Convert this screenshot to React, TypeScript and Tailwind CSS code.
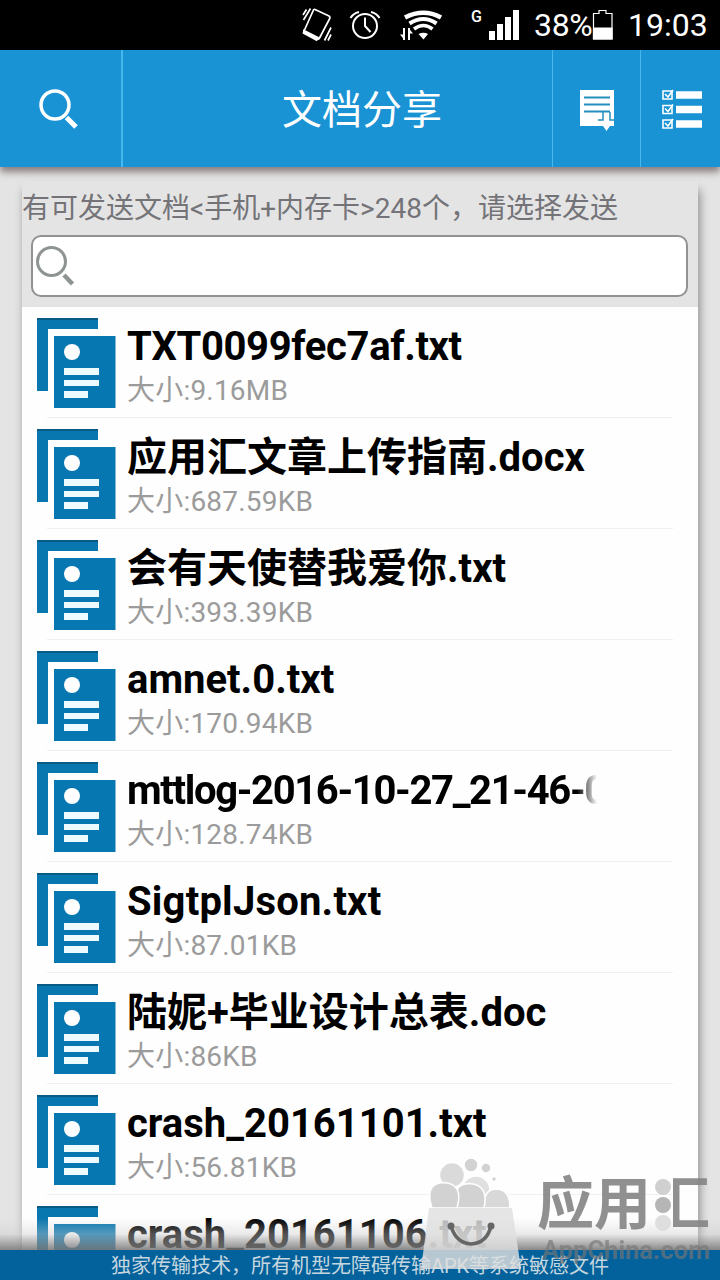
import React from 'react'

type DocFile = {
  name: string
  size: string
  nameClass?: string
}

const files: DocFile[] = [
  { name: 'TXT0099fec7af.txt', size: '9.16MB', nameClass: 'tracking-[-0.35px]' },
  { name: '应用汇文章上传指南.docx', size: '687.59KB' },
  { name: '会有天使替我爱你.txt', size: '393.39KB' },
  { name: 'amnet.0.txt', size: '170.94KB' },
  {
    name: 'mttlog-2016-10-27_21-46-0',
    size: '128.74KB',
    nameClass: 'tracking-[-1.35px] [mask-image:linear-gradient(to_right,black_450px,transparent_470px)]',
  },
  { name: 'SigtplJson.txt', size: '87.01KB', nameClass: 'tracking-[0.2px]' },
  { name: '陆妮+毕业设计总表.doc', size: '86KB' },
  { name: 'crash_20161101.txt', size: '56.81KB' },
  { name: 'crash_20161106.txt', size: '52.3KB' },
]

function StatusBar() {
  return (
    <div className="h-[50px] shrink-0 bg-black text-white flex items-center">
      <svg className="ml-[301px] shrink-0" width="32" height="50" fill="none" stroke="#fff" strokeWidth="1.7">
        <path d="M14 9.5 28 16Q29.5 17 28.5 19L18.5 38Q17.5 40 15.5 39L4 33Q2.5 32 3.5 30L12 11Q12.5 9 14 9.5Z" />
        <path d="M3 30.5 17 37.5 15.5 40 2.5 33Z" fill="#fff" />
        <path d="M2 15 5.5 9.5M2.5 20 9.5 8.5M27 40.5 30 34.5M23.5 40.5 30 27.5" />
      </svg>
      <svg className="ml-4 shrink-0" width="33" height="50" fill="none" stroke="#fff" strokeWidth="2">
        <circle cx="16" cy="26" r="12" />
        <path d="M16 17.5V26L21.5 32M1.5 18Q4 13.5 10 12M22 12Q28 13.5 30.5 18" />
      </svg>
      <svg className="ml-[17px] shrink-0" width="44" height="50" fill="none" stroke="#fff">
        <path d="M6 17.500Q24.500 8 42 17.500" strokeWidth="4.600" />
        <path d="M10.500 23.500Q24.500 14.500 37.500 23.500" strokeWidth="4" />
        <path d="M15 29Q24.500 22 33.500 29" strokeWidth="3.600" />
        <path d="M19.500 34Q24.500 31.500 29 34L24.500 39.500Z" fill="#fff" stroke="none" />
        <path d="M5 28V40M10 40V28" strokeWidth="2" />
        <path d="M1 34.500H5V39.500ZM14 33.500H10V28.500Z" fill="#fff" stroke="none" />
      </svg>
      <span className="ml-[28px] w-[17px] -mt-4 text-[16px] leading-5 font-medium">G</span>
      <svg className="shrink-0" width="31" height="50" fill="#fff">
        <path d="M1 31h6v9H1zM9 24h6v16H9zM17 17h6v23h-6zM25 10h6v30h-6z" />
      </svg>
      <span className="ml-[15px] w-[58px] text-[32px] leading-[50px] tracking-[-0.3px] whitespace-nowrap">38%</span>
      <svg className="shrink-0" width="21" height="50" fill="none" stroke="#fff" strokeWidth="1.2">
        <path d="M1.5 39V13.5H7V10.5H14V13.5H20V39Z" />
        <path d="M1.5 28H20V39H1.5Z" fill="#fff" />
      </svg>
      <span className="ml-[15px] text-[32px] leading-[50px]">19:03</span>
    </div>
  )
}

function Header() {
  return (
    <div className="relative z-10 h-[117px] shrink-0 flex bg-[#1993d4] shadow-[0_5px_7px_rgba(90,70,70,0.65)]">
      <div className="w-[123px] border-r-2 border-[#46b8ee] flex items-center">
        <svg className="ml-[38px]" width="42" height="42" fill="none" stroke="#fff">
          <circle cx="17" cy="17" r="14" strokeWidth="3.5" />
          <path d="M28.5 29.5 38 39" strokeWidth="5" />
        </svg>
      </div>
      <div className="w-[430px] border-r border-[#46b8ee] flex items-center justify-center">
        <h1 className="ml-[49px] mt-1 text-[40px] leading-[58px] text-white">文档分享</h1>
      </div>
      <div className="w-[88px] border-r border-[#46b8ee] flex items-center">
        <svg className="ml-[26px] mt-1" width="38" height="44">
          <path d="M1 1H35V37H1Z" fill="#fff" />
          <path d="M5 8.5H31M5 15.5H31M5 22.5H31" stroke="#238fbd" strokeWidth="2" />
          <path d="M24 23V31H19M31 23V31H36" fill="none" stroke="#238fbd" strokeWidth="1.5" />
          <path d="M25.500 24H29.500V32H34.500L27.500 42 20.500 32H25.500Z" fill="#fff" />
        </svg>
      </div>
      <div className="flex-1 flex items-center">
        <svg className="ml-5 mt-0.5" width="42" height="42" fill="none" stroke="#fff">
          {[1, 15.5, 30].map((y) => (
            <g key={y}>
              <path d={`M2 ${y + 1}h9v8h-9Z`} strokeWidth="1.6" />
              <path d={`M4 ${y + 4}l3 3 5-7`} strokeWidth="1.6" />
              <path d={`M15 ${y + 5}h26`} strokeWidth="7.5" />
            </g>
          ))}
        </svg>
      </div>
    </div>
  )
}

function DocIcon() {
  return (
    <svg className="ml-[15px] mt-[11px] shrink-0" width="79" height="90">
      <path d="M0 0H61V11H11V73H0Z" fill="#0876af" />
      <path d="M0 0H61V2H0Z" fill="#075b85" />
      <path d="M17 18H78.5V90H17Z" fill="#0777b2" />
      <circle cx="35" cy="34" r="8" fill="#fff" />
      <path d="M27 50H62V57H27ZM27 62H62V68H27ZM27 73H51V80H27Z" fill="#edfaff" />
    </svg>
  )
}

function FileRow({ file }: { file: DocFile }) {
  return (
    <li className="h-[111px] shrink-0 flex">
      <DocIcon />
      <div className="ml-[11px] mt-3 w-[480px]">
        <p className={`h-[56px] leading-[56px] text-[40px] font-bold text-black whitespace-nowrap ${file.nameClass ?? ''}`}>
          {file.name}
        </p>
        <p className="h-8 leading-8 text-[28px] tracking-[0.2px] text-[#9b9b9b]">大小:{file.size}</p>
      </div>
    </li>
  )
}

function Watermark() {
  return (
    <div className="absolute left-[420px] top-[1155px] w-[300px] h-[120px]">
      <svg className="absolute left-0 top-0" width="125" height="120">
        <g fill="#d2d2d2" stroke="#fff" strokeWidth="1.5">
          <circle cx="51" cy="10" r="7" />
          <circle cx="66" cy="13" r="5" />
          <circle cx="74" cy="24" r="2.5" />
          <circle cx="32" cy="20" r="12.5" fill="#dadada" />
          <circle cx="56" cy="35" r="14" fill="#e0e0e0" />
          <path d="M64 53V48Q65 34 77 34 90 35 90 53Z" fill="#d8d8d8" />
          <path d="M37 53Q30 29 50 28.500 69 30 64 53Z" />
          <path d="M12 53Q4 28 24 27.500 44 29 37 53Z" />
        </g>
        <path d="M9 53H92L101 114H1Z" fill="#dfdfdf" opacity="0.82" />
        <path d="M31 71Q36 88 51 89 67 88 71 71" fill="none" stroke="#666" strokeWidth="3.5" />
        <circle cx="31" cy="71" r="3.5" fill="#666" />
        <circle cx="71" cy="71" r="3.5" fill="#666" />
      </svg>
      <p className="absolute left-[117px] top-[15px] flex text-[57px] leading-[70px] font-bold text-[#858585] opacity-90">
        <span>应用</span>
        <span className="ml-0.5 [clip-path:inset(0_0_0_20px)]">汇</span>
      </p>
      <svg className="absolute left-[233px] top-[23px]" width="20" height="56" fill="#d0d0d0">
        <circle cx="10" cy="9" r="8" />
        <circle cx="10" cy="27" r="8" fill="#b5b5b5" />
        <circle cx="10" cy="45" r="8" fill="#dedede" />
      </svg>
      <p className="absolute left-[122px] top-[79px] text-[25.5px] leading-8 font-bold text-[#777] opacity-65 whitespace-nowrap">
        AppChina.com
      </p>
    </div>
  )
}

export default function App() {
  return (
    <div className="relative w-[720px] h-[1280px] overflow-hidden flex flex-col bg-[#e4e4e4] font-[Roboto,'Noto_Sans_CJK_SC',sans-serif]">
      <StatusBar />
      <Header />
      <main className="h-[1083px] shrink-0 overflow-hidden pt-[13px]">
        <div className="ml-[22px] w-[676px] h-[1100px] bg-[#fefefe] shadow-[2px_10px_9px_rgba(0,0,0,0.38)]">
          <div className="h-[127px] bg-[#e4e4e4] overflow-hidden">
            <p className="mt-[9px] h-10 leading-10 text-[28px] text-[#737378] whitespace-nowrap">
              有可发送文档&lt;手机+内存卡&gt;248个，请选择发送
            </p>
            <div className="ml-[9px] mt-1.5 w-[657px] h-[62px] rounded-[10px] border-2 border-[#929292] bg-white flex items-start">
              <svg className="ml-[3px] mt-[9px]" width="40" height="40" fill="none" stroke="#8e9494">
                <circle cx="15.5" cy="15.5" r="14" strokeWidth="3" />
                <path d="M28 29 36.5 38" strokeWidth="4.5" />
              </svg>
            </div>
          </div>
          <ul className="flex flex-col">
            {files.map((file) => (
              <React.Fragment key={file.name}>
                <FileRow file={file} />
                <li className="h-px -mt-px ml-[25px] mr-[25px] shrink-0 bg-[#f0f0f0]"></li>
              </React.Fragment>
            ))}
          </ul>
        </div>
      </main>
      <footer className="relative h-[30px] shrink-0 bg-[#03619b] flex justify-center">
        <div className="absolute inset-x-0 -top-8 h-8 bg-linear-to-b from-[#ffffff00] via-[#cccccc66] to-[#777777dd]"></div>
        <p className="mt-px text-[20px] leading-[30px] text-[#c5d6df] whitespace-nowrap">
          独家传输技术，所有机型无障碍传输APK等系统敏感文件
        </p>
      </footer>
      <Watermark />
    </div>
  )
}
